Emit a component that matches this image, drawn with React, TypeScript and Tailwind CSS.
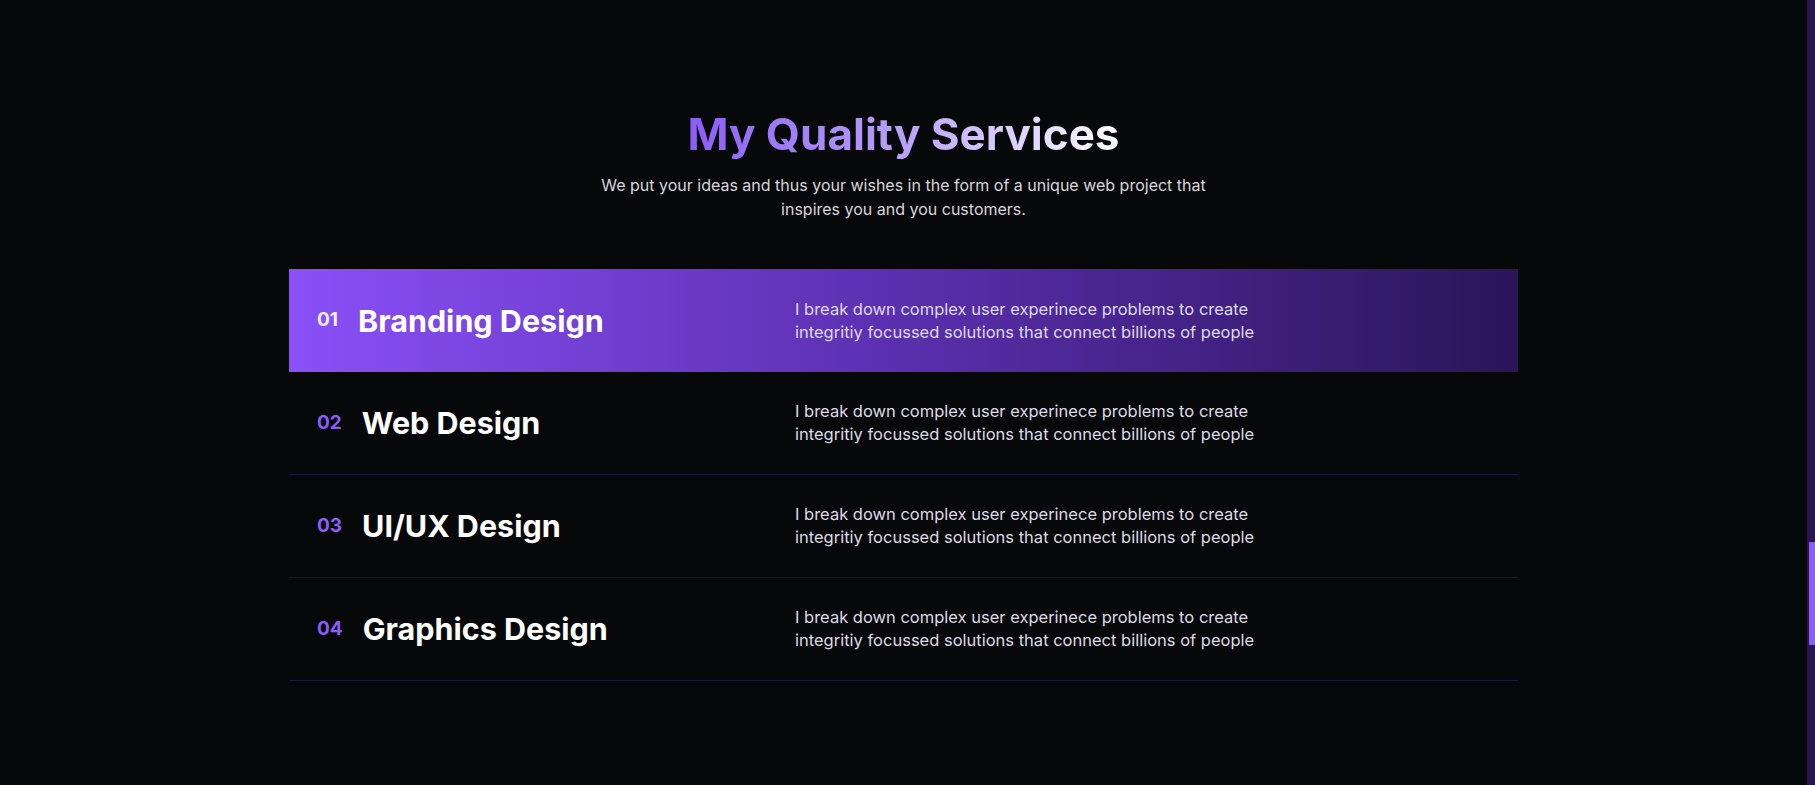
import type { ReactNode } from "react";

type Service = {
  id: string;
  title: string;
  text: ReactNode;
};

const services: Service[] = [
  { id: "01", title: "Branding Design", text: "" },
  { id: "02", title: "Web Design", text: "" },
  { id: "03", title: "UI/UX Design", text: "" },
  { id: "04", title: "Graphics Design", text: "" },
];

function ServiceRow({ item, active }: { item: Service; active: boolean }) {
  return (
    <div
      className={
        active
          ? "flex h-[103px] items-center bg-gradient-to-r from-[#8a50f7] via-[#5a2fae] to-[#2b1559] px-7"
          : "flex h-[103px] items-center border-b border-[#23124a] px-7"
      }
    >
      <div className="flex w-[478px] shrink-0 items-center gap-5">
        <span
          className={
            active
              ? "text-[19px] font-bold text-[#f3ecff]"
              : "text-[19px] font-bold text-[#8b5cf6]"
          }
        >
          {item.id}
        </span>
        <h3 className="text-[30.5px] font-bold text-white">{item.title}</h3>
      </div>
      <p className="text-[16.5px] leading-[23px] text-[#dedbe6]">
        I break down complex user experinece problems to create
        <br />
        integritiy focussed solutions that connect billions of people
      </p>
    </div>
  );
}

export default function App() {
  return (
    <div className="flex min-h-screen bg-[#07080a] font-['Inter',sans-serif]">
      <main className="flex-1 pt-[108px]">
        <section className="mx-auto w-[1229px]">
          <div className="text-center">
            <h2 className="inline-block bg-gradient-to-r from-[#8b5cf6] via-[#b9a1f5] to-white bg-clip-text text-[44px] font-bold leading-[53px] text-transparent">
              My Quality Services
            </h2>
            <p className="mx-auto mt-3 max-w-[640px] text-[16px] leading-6 text-[#d9d6de]">
              We put your ideas and thus your wishes in the form of a unique web
              project that inspires you and you customers.
            </p>
          </div>

          <div className="mt-12">
            {services.map((item, i) => (
              <ServiceRow key={item.id} item={item} active={i === 0} />
            ))}
          </div>
        </section>
      </main>

      <aside className="w-2 shrink-0 bg-[#2a1552] pl-[2px] pt-[542px]">
        <div className="h-[103px] bg-[#8b5cf6]" />
      </aside>
    </div>
  );
}
